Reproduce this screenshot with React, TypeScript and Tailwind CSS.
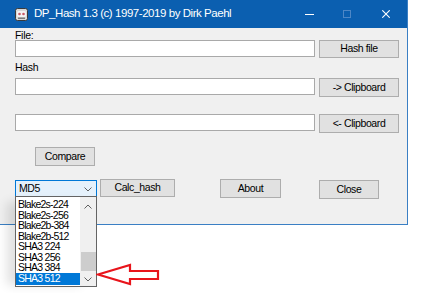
import React from "react";

const font = { fontFamily: '"Liberation Sans", Arial, sans-serif' };

function Btn({ label, className }: { label: string; className: string }) {
  return (
    <div
      className={`flex items-center justify-center bg-[#e1e1e1] border border-[#adadad] text-[10.5px] tracking-[-0.4px] text-black ${className}`}
    >
      {label}
    </div>
  );
}

function Box({ className }: { className: string }) {
  return <div className={`bg-white border border-[#a9a9a9] ${className}`} />;
}

const items = [
  "Blake2s-224",
  "Blake2s-256",
  "Blake2b-384",
  "Blake2b-512",
  "SHA3 224",
  "SHA3 256",
  "SHA3 384",
  "SHA3 512",
];

export default function App() {
  return (
    <div className="relative w-[438px] h-[293px] bg-white overflow-hidden" style={font}>
      <div className="w-[408px] h-[225px] flex flex-col border-r border-b border-[#3a7fc4]">
        {/* title bar */}
        <div className="h-[28px] bg-[#0b5fb0] flex items-center text-white">
          <svg width="13" height="13" viewBox="0 0 13 13" className="ml-[15px]">
            <rect x="0.5" y="0.5" width="12" height="12" rx="2" fill="#d9d9d9" stroke="#3a3a3a" />
            <rect x="2" y="3" width="9" height="6" rx="1.5" fill="#f4f4f4" />
            <circle cx="4.5" cy="6" r="1.3" fill="#c85a68" />
            <circle cx="8.5" cy="6" r="1.3" fill="#c85a68" />
            <rect x="3" y="9.5" width="7" height="1.5" fill="#7a7a7a" />
          </svg>
          <span className="ml-[6px] text-[11.5px] tracking-[-0.45px]">DP_Hash 1.3 (c) 1997-2019 by Dirk Paehl</span>
          <div className="flex-1" />
          <div className="w-[9px] h-[1px] bg-white mr-[29px]" />
          <div className="w-[8px] h-[8px] border border-[#4d87c6] mr-[31px]" />
          <svg width="8" height="8" viewBox="0 0 8 8" className="mr-[17px]">
            <path d="M0.3 0.3L7.7 7.7M7.7 0.3L0.3 7.7" stroke="white" strokeWidth="1.1" />
          </svg>
        </div>
        {/* body */}
        <div className="flex-1 bg-[#f0f0f0] pl-[15px] flex flex-col text-black">
          <div className="h-[12px] text-[10.5px] tracking-[-0.3px] leading-[12px] mt-[1px]">File:</div>
          <div className="flex items-start gap-[4px] mt-[-1px]">
            <Box className="w-[300px] h-[17px]" />
            <Btn label="Hash file" className="w-[80px] h-[18px]" />
          </div>
          <div className="h-[12px] text-[10.5px] tracking-[-0.3px] leading-[12px] mt-[3px]">Hash</div>
          <div className="flex items-start gap-[4px] mt-[5px]">
            <Box className="w-[300px] h-[17px]" />
            <Btn label="-> Clipboard" className="w-[80px] h-[19px]" />
          </div>
          <div className="flex items-start gap-[4px] mt-[17px]">
            <Box className="w-[300px] h-[17px]" />
            <Btn label="<- Clipboard" className="w-[80px] h-[19px]" />
          </div>
          <div className="mt-[14px] ml-[20px]">
            <Btn label="Compare" className="w-[60px] h-[19px]" />
          </div>
          <div className="flex items-start mt-[13px]">
            <div className="w-[82px] h-[18px] mt-[1px] bg-[#e5f1fb] border border-[#0078d7] flex items-center pl-[3px] text-[10.5px] tracking-[-0.4px]">
              <span className="flex-1">MD5</span>
              <svg width="8" height="5" viewBox="0 0 8 5" className="mr-[4px]">
                <path d="M0.5 0.5L4 4L7.5 0.5" stroke="#606060" fill="none" />
              </svg>
            </div>
            <Btn label="Calc_hash" className="w-[75px] h-[18px] ml-[3px]" />
            <Btn label="About" className="w-[61px] h-[19px] ml-[45px]" />
            <Btn label="Close" className="w-[60px] h-[19px] ml-[38px] mt-[1px]" />
          </div>
        </div>
      </div>

      {/* dropdown list */}
      <div className="absolute left-[15px] top-[196px] w-[82px] h-[91px] bg-white border border-[#646464] flex shadow-[-12px_2px_10px_-4px_rgba(0,0,0,0.12)]">
        <div className="flex-1 flex flex-col pt-[2px]">
          {items.map((it, i) => (
            <div
              key={it}
              className={`leading-[10.5px] text-[10.5px] tracking-[-0.75px] pl-[2px] ${
                i === items.length - 1 ? "h-[12px] bg-[#0078d7] text-white" : "h-[10.5px] text-black"
              }`}
            >
              {it}
            </div>
          ))}
        </div>
        <div className="w-[16px] bg-[#f0f0f0] flex flex-col items-center">
          <svg width="8" height="5" viewBox="0 0 8 5" className="mt-[7px]">
            <path d="M0.5 4.5L4 1L7.5 4.5" stroke="#606060" fill="none" />
          </svg>
          <div className="flex-1" />
          <div className="w-[15px] h-[19px] bg-[#cdcdcd]" />
          <svg width="8" height="5" viewBox="0 0 8 5" className="mt-[6px] mb-[4px]">
            <path d="M0.5 0.5L4 4L7.5 0.5" stroke="#606060" fill="none" />
          </svg>
        </div>
      </div>

      {/* red arrow */}
      <svg className="absolute left-[96px] top-[263px]" width="66" height="24" viewBox="0 0 66 24">
        <path
          d="M2 11.5 L34 2 L34 8 L62 8 L62 16 L34 16 L34 21 Z"
          fill="white"
          stroke="#e8141b"
          strokeWidth="2.2"
          strokeLinejoin="miter"
        />
      </svg>
    </div>
  );
}
